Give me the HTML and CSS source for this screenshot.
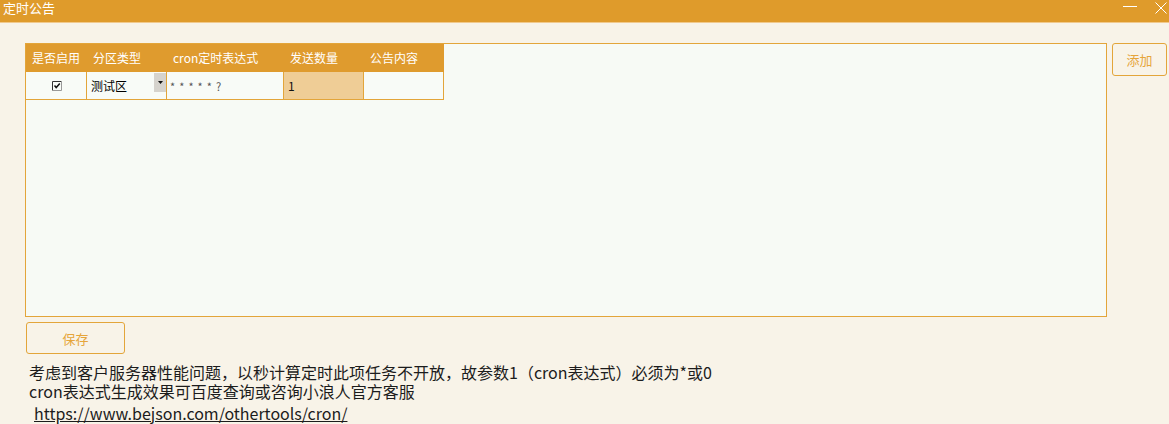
FILE: index.html
```html
<!DOCTYPE html>
<html lang="zh">
<head>
<meta charset="utf-8">
<link rel="stylesheet" href="styles.css">
</head>
<body>
<div class="window">
  <div class="titlebar">
    <div class="title">定时公告</div>
    <div class="controls">
      <svg class="ctl-min" width="14" height="2" viewBox="0 0 14 2"><rect x="0" y="0" width="14" height="1" fill="#fff"/></svg>
      <svg class="ctl-close" width="12" height="12" viewBox="0 0 12 12"><path d="M0.5 0.5 L11.5 11.5 M11.5 0.5 L0.5 11.5" stroke="#fff" stroke-width="1" fill="none"/></svg>
    </div>
  </div>
  <div class="content">
    <div class="top-row">
      <div class="panel">
        <div class="grid-row head">
          <div class="hcell c1">是否启用</div>
          <div class="hcell c2">分区类型</div>
          <div class="hcell c3">cron定时表达式</div>
          <div class="hcell c4">发送数量</div>
          <div class="hcell c5">公告内容</div>
        </div>
        <div class="grid-row data">
          <div class="dcell c1">
            <svg width="10" height="10" viewBox="0 0 10 10"><path d="M0.5 9.5 V0.5 H9.5" stroke="#333" stroke-width="1" fill="none"/><path d="M9.5 0.5 V9.5 H0.5" stroke="#999" stroke-width="1" fill="none"/><path d="M2.5 4.5 L4.2 6.5 L7.8 2.6" stroke="#111" stroke-width="1.5" fill="none"/></svg>
          </div>
          <div class="dcell c2">
            <span class="combo-text">测试区</span>
            <span class="combo-btn"><svg width="5" height="3" viewBox="0 0 5 3"><path d="M0 0 H5 L2.5 3 Z" fill="#111"/></svg></span>
          </div>
          <div class="dcell c3"><span class="cron">* * * * * ?</span></div>
          <div class="dcell c4 sel">1</div>
          <div class="dcell c5"></div>
        </div>
      </div>
      <button class="btn btn-add">添加</button>
    </div>
    <button class="btn btn-save">保存</button>
    <div class="notes">
      <div class="line">考虑到客户服务器性能问题，以秒计算定时此项任务不开放，故参数1（cron表达式）必须为*或0</div>
      <div class="line">cron表达式生成效果可百度查询或咨询小浪人官方客服</div>
      <div class="line link-line"><a class="link">https://www.bejson.com/othertools/cron/</a></div>
    </div>
  </div>
</div>
</body>
</html>
```
FILE: styles.css
```css
html, body {
  margin: 0;
  padding: 0;
}
body {
  width: 1169px;
  height: 424px;
  overflow: hidden;
  background: #f8f3e8;
  font-family: "Noto Sans CJK SC", "Noto Sans", sans-serif;
}
.window {
  width: 1169px;
  height: 424px;
}
.titlebar {
  height: 22px;
  background: #df9b2b;
  border-bottom: 1px solid #f1c98c;
  display: flex;
  justify-content: space-between;
  align-items: flex-start;
}
.title {
  color: #fff;
  font-size: 13px;
  line-height: 16px;
  padding: 0 0 0 3px;
}
.controls {
  display: flex;
  align-items: flex-start;
  gap: 18px;
  padding-right: 2px;
}
.ctl-min {
  margin-top: 6px;
}
.ctl-close {
  margin-top: 2px;
}
.content {
  padding: 20px 0 0 25px;
}
.top-row {
  display: flex;
  align-items: flex-start;
  gap: 5px;
}
.panel {
  box-sizing: border-box;
  width: 1082px;
  height: 274px;
  border: 1px solid #e3a53a;
  background: #f7faf5;
}
.grid-row {
  display: grid;
  grid-template-columns: 61px 80px 117px 80px 80px;
  width: 418px;
}
.head {
  height: 28px;
  background: #df9b2e;
}
.hcell {
  color: #fff;
  font-size: 12px;
  line-height: 28px;
  white-space: nowrap;
  padding-left: 6px;
}
.data {
  height: 28px;
}
.dcell {
  box-sizing: border-box;
  height: 28px;
  border-right: 1px solid #e3a53a;
  border-bottom: 1px solid #e3a53a;
  font-size: 12px;
  line-height: 27px;
  color: #111;
  background: #f8fbf7;
}
.dcell.c1 {
  display: flex;
  justify-content: center;
  align-items: center;
  padding-left: 2px;
}
.dcell.c2 {
  display: flex;
  justify-content: space-between;
  align-items: flex-start;
  padding-left: 4px;
}
.combo-text {
  font-size: 12px;
  line-height: 27px;
  color: #000;
}
.combo-btn {
  width: 12px;
  height: 19px;
  background: #d6d3cd;
  display: flex;
  justify-content: center;
  align-items: center;
  margin-top: 1px;
}
.dcell.c3 {
  padding-left: 3px;
}
.cron {
  color: #555;
  font-size: 11px;
  letter-spacing: 0.8px;
}
.dcell.c4 {
  padding-left: 4px;
}
.dcell.sel {
  background: #efcd96;
}
.btn {
  box-sizing: border-box;
  background: #f8f3e8;
  border: 1px solid #e3a53a;
  border-radius: 3px;
  color: #e6a53a;
  font-family: "Noto Sans CJK SC", "Noto Sans", sans-serif;
  font-size: 13px;
  padding: 0;
  margin: 0;
}
.btn-add {
  width: 55px;
  height: 33px;
}
.btn-save {
  display: block;
  width: 99px;
  height: 32px;
  margin: 5px 0 0 1px;
}
.notes {
  margin-top: 9px;
  padding-left: 4px;
  color: #1c1c1c;
  font-size: 16px;
}
.line {
  line-height: 19px;
  white-space: nowrap;
}
.link-line {
  margin-top: 3px;
  padding-left: 5px;
}
.link {
  color: #1c1c1c;
  text-decoration: underline;
}
```
